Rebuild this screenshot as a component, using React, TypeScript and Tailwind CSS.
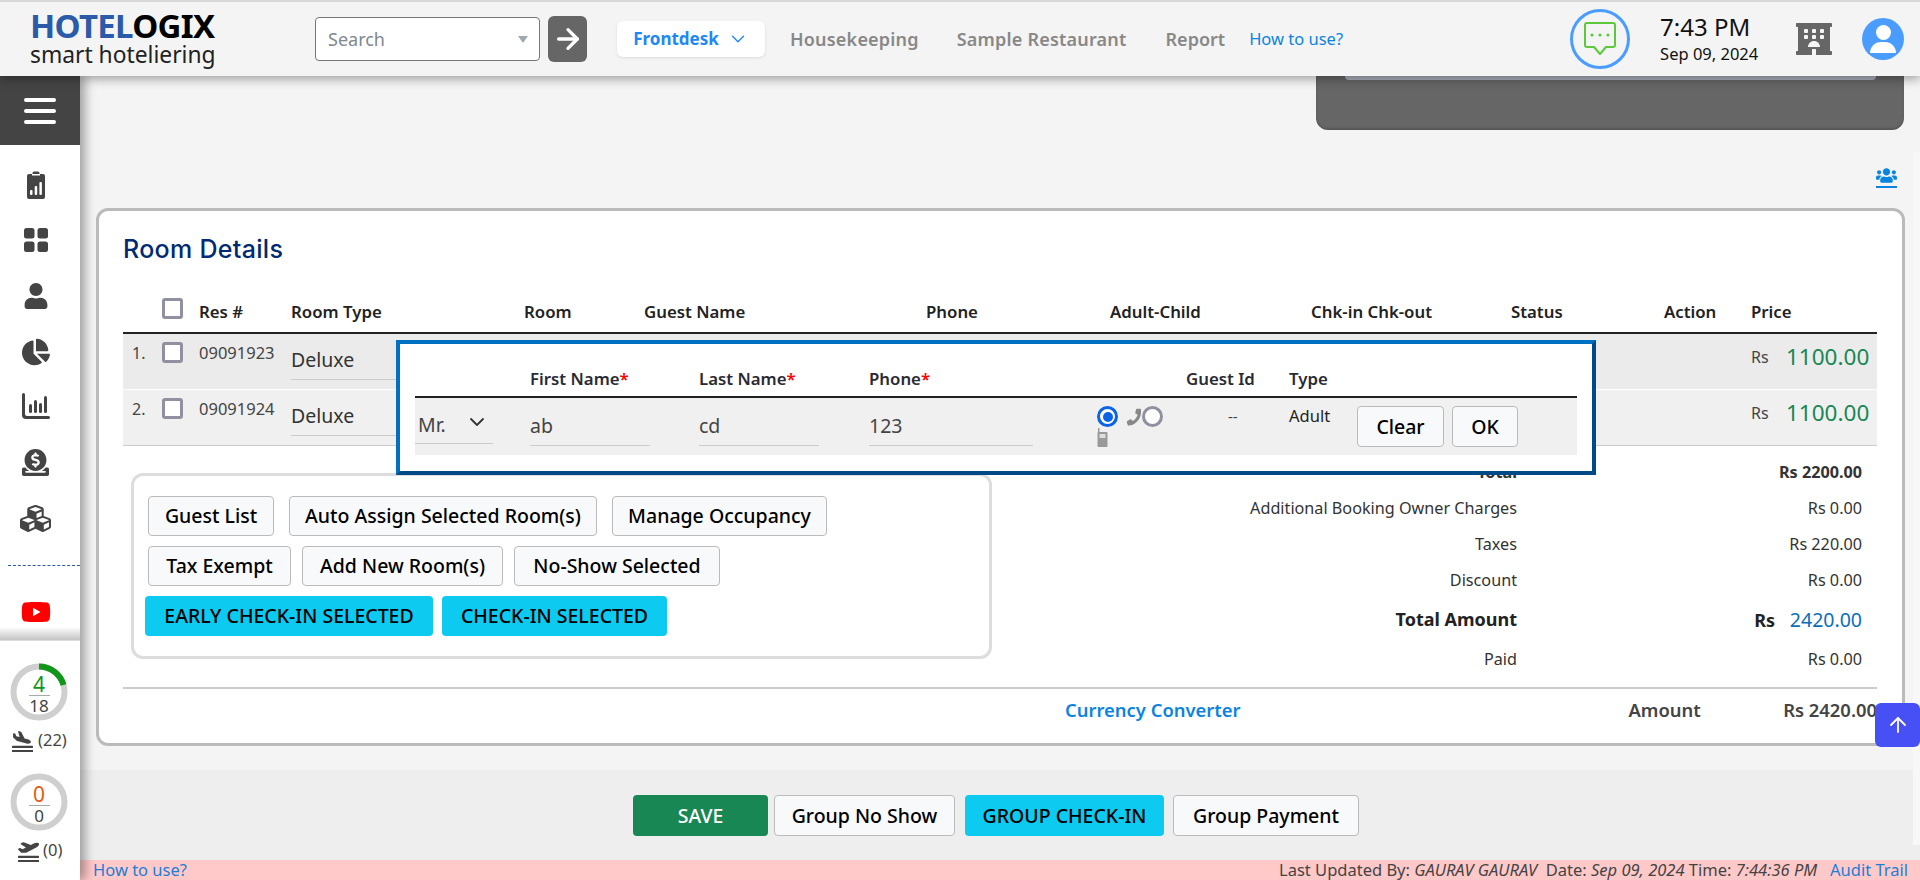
import { ArrowRight, ArrowUp, ChevronDown } from 'lucide-react';
import {
    FaChartPie,
    FaCubes,
    FaDonate,
    FaHotel,
    FaPhone,
    FaPlaneArrival,
    FaPlaneDeparture,
    FaUser,
    FaUsers,
    FaYoutube,
} from 'react-icons/fa';

function ClipboardIcon() {
    return (
        <svg width="18" height="28" viewBox="0 0 18 28" fill="#444">
            <path d="M2 3h3.5V2a1.5 1.5 0 0 1 1.5-1.500h4A1.500 1.500 0 0 1 12.500 2v1H16a2 2 0 0 1 2 2v21a2 2 0 0 1-2 2H2a2 2 0 0 1-2-2V5a2 2 0 0 1 2-2z" />
            <rect x="5" y="3" width="8" height="1.500" fill="#fff" />
            <rect x="3" y="19" width="2.500" height="5" rx="1" fill="#fff" />
            <rect x="7.700" y="15" width="2.500" height="9" rx="1" fill="#fff" />
            <rect x="12.400" y="11" width="2.500" height="13" rx="1" fill="#fff" />
        </svg>
    );
}

function GridIcon() {
    return (
        <svg width="24" height="24" viewBox="0 0 24 24" fill="#444">
            <rect x="0" y="0" width="10.500" height="10.500" rx="2.500" />
            <rect x="13.500" y="0" width="10.500" height="10.500" rx="2.500" />
            <rect x="0" y="13.500" width="10.500" height="10.500" rx="2.500" />
            <rect x="13.500" y="13.500" width="10.500" height="10.500" rx="2.500" />
        </svg>
    );
}

function BarsIcon() {
    return (
        <svg width="28" height="26" viewBox="0 0 28 26" fill="#444">
            <path d="M0 1.500a1.500 1.500 0 0 1 3 0V21a2 2 0 0 0 2 2h21.500a1.500 1.500 0 0 1 0 3H4a4 4 0 0 1-4-4z" />
            <rect x="7" y="11" width="3" height="9" rx="1.500" />
            <rect x="12" y="7" width="3" height="13" rx="1.500" />
            <rect x="17" y="10" width="3" height="10" rx="1.500" />
            <rect x="22" y="3" width="3" height="17" rx="1.500" />
        </svg>
    );
}

function ChatIcon() {
    return (
        <svg width="34" height="36" viewBox="0 0 34 36" fill="none" stroke="#5cc93b" strokeWidth="2">
            <path d="M4 2h26a2 2 0 0 1 2 2v20a2 2 0 0 1-2 2h-7l-6 7-6-7H4a2 2 0 0 1-2-2V4a2 2 0 0 1 2-2z" strokeLinejoin="round" />
            <circle cx="9" cy="14" r="1.600" fill="#5cc93b" stroke="none" />
            <circle cx="17" cy="14" r="1.600" fill="#5cc93b" stroke="none" />
            <circle cx="25" cy="14" r="1.600" fill="#5cc93b" stroke="none" />
        </svg>
    );
}

function MobileIcon() {
    return (
        <svg width="11" height="19" viewBox="0 0 11 19" fill="#999">
            <rect x="1" y="0" width="1.500" height="6" />
            <rect x="0.500" y="4" width="10" height="15" rx="1" />
            <rect x="2.500" y="6" width="6" height="4" fill="#ddd" />
        </svg>
    );
}

function Ring({ top, bottom, color, arc }: { top: string; bottom: string; color: string; arc: boolean }) {
    return (
        <div className="grid w-[58px] h-[58px] ml-[10px]">
            <svg width="58" height="58" viewBox="0 0 58 58" className="[grid-area:1/1]">
                <circle cx="29" cy="29" r="25.500" fill="none" stroke="#cfcfcf" strokeWidth="6" />
                {arc && (
                    <path d="M29 3.500A25.500 25.500 0 0 1 53.500 22" fill="none" stroke="#109618" strokeWidth="6" />
                )}
            </svg>
            <div className="[grid-area:1/1] flex flex-col items-center justify-center pt-[5px]">
                <div className={`text-[21px] leading-[21px] w-[21px] text-center border-b border-[#aaa] ${color}`}>{top}</div>
                <div className="text-[17px] leading-[20px] text-[#444]">{bottom}</div>
            </div>
        </div>
    );
}

function Btn({ children, className }: { children: React.ReactNode; className: string }) {
    return (
        <button className={`h-[40px] rounded-[4px] border border-[#bbb] bg-[#f8f9fa] text-[19.500px] font-medium text-black flex items-center justify-center whitespace-nowrap ${className}`}>
            {children}
        </button>
    );
}

function CyanBtn({ children, className }: { children: React.ReactNode; className: string }) {
    return (
        <button className={`h-[40px] rounded-[4px] bg-[#0dcaf0] text-[19.500px] font-medium text-black flex items-center justify-center whitespace-nowrap ${className}`}>
            {children}
        </button>
    );
}

function Sidebar() {
    return (
        <div className="w-[80px] shrink-0 bg-white flex flex-col z-10 shadow-[5px_0_10px_rgba(0,0,0,0.35)]">
            <div className="h-[69px] bg-[#444] flex flex-col items-center justify-center gap-[7px]">
                <div className="w-[32px] h-[4px] rounded-full bg-white" />
                <div className="w-[32px] h-[4px] rounded-full bg-white" />
                <div className="w-[32px] h-[4px] rounded-full bg-white" />
            </div>
            <div className="h-[482px] flex flex-col items-center pt-[26px] text-[#444]">
                <div className="h-[28px] flex items-center mr-[9px]"><ClipboardIcon /></div>
                <div className="h-[28px] mt-[27px] flex items-center mr-[9px]"><GridIcon /></div>
                <div className="h-[28px] mt-[28px] flex items-center mr-[9px]"><FaUser size={26} /></div>
                <div className="h-[28px] mt-[28px] flex items-center mr-[9px]"><FaChartPie size={28} /></div>
                <div className="h-[28px] mt-[27px] flex items-center mr-[9px]"><BarsIcon /></div>
                <div className="h-[28px] mt-[28px] flex items-center mr-[9px]"><FaDonate size={27} /></div>
                <div className="h-[28px] mt-[28px] flex items-center mr-[9px]"><FaCubes size={31} /></div>
                <div className="w-[72px] self-end mt-[33px] border-t border-dashed border-[#2a5aa8]" />
                <div className="mt-[31px] mr-[9px] text-[#f00]"><FaYoutube size={30} /></div>
            </div>
            <div className="h-[13px] bg-gradient-to-b from-white to-[#c4c4c4]" />
            <div className="flex-1 pt-[22px] border-t border-[#ddd]">
                <Ring top="4" bottom="18" color="text-[#109618]" arc />
                <div className="flex items-center h-[24px] mt-[7px] ml-[12px] text-[16.500px] text-[#444] gap-[5px]">
                    <div className="border-b-2 border-[#444] leading-none"><FaPlaneArrival size={21} /></div>
                    <span>(22)</span>
                </div>
                <div className="mt-[21px]"><Ring top="0" bottom="0" color="text-[#e8590c]" arc={false} /></div>
                <div className="flex items-center h-[24px] mt-[7px] ml-[18px] text-[16.500px] text-[#444] gap-[4px]">
                    <div className="border-b-2 border-[#444] leading-none"><FaPlaneDeparture size={21} /></div>
                    <span>(0)</span>
                </div>
            </div>
        </div>
    );
}

function Header() {
    return (
        <div className="h-[76px] shrink-0 bg-[#f4f4f4] border-t-2 border-[#d8d8d8] z-20 relative shadow-[0_3px_10px_rgba(0,0,0,0.35)] flex items-center">
            {/* Logo */}
            <div className="w-[315px] shrink-0 pl-[30px] mt-[1px]">
                <div className="text-[33px] leading-[28px] font-bold tracking-[-0.700px] whitespace-nowrap">
                    <span className="text-[#2a5aa8]">HOTEL</span>
                    <span className="text-black">OGIX</span>
                </div>
                <div className="text-[24px] leading-[28px] text-[#222] whitespace-nowrap scale-x-[0.95] origin-left">smart hoteliering</div>
            </div>

            {/* Search */}
            <div className="w-[225px] h-[44px] rounded-[4px] border border-[#777] bg-white flex items-center justify-between pl-[12px] pr-[11px]">
                <span className="text-[18px] text-[#808890]">Search</span>
                <div className="w-0 h-0 border-x-[5.500px] border-x-transparent border-t-[7px] border-t-[#a0a8b0]" />
            </div>
            <div className="w-[39px] h-[46px] ml-[8px] rounded-[6px] bg-[#666] flex items-center justify-center">
                <ArrowRight size={32} color="#fff" strokeWidth={2.500} />
            </div>

            {/* Nav */}
            <div className="w-[148px] h-[36px] ml-[30px] rounded-[6px] bg-white flex items-center justify-center gap-[8px] shadow-[0_1px_3px_rgba(0,0,0,0.1)] text-[17px] font-bold text-[#1e88f5]">
                Frontdesk
                <ChevronDown size={22} strokeWidth={1.500} />
            </div>
            <span className="ml-[25px] text-[18px] tracking-[0.2px] font-semibold text-[#888]">Housekeeping</span>
            <span className="ml-[38px] text-[18px] tracking-[0.2px] font-semibold text-[#888]">Sample Restaurant</span>
            <span className="ml-[39px] text-[18px] font-semibold text-[#888]">Report</span>
            <span className="ml-[24px] text-[16.500px] text-[#0a84e0]">How to use?</span>

            {/* Right side */}
            <div className="ml-[227px] w-[60px] h-[60px] rounded-full border-[3px] border-[#4a9dff] flex items-center justify-center">
                <ChatIcon />
            </div>
            <div className="ml-[30px] w-[136px]">
                <div className="text-[24px] leading-[30px] text-[#111]">7:43 PM</div>
                <div className="text-[16.500px] leading-[24px] text-[#111]">Sep 09, 2024</div>
            </div>
            <FaHotel size={36} color="#666" />
            <div className="ml-[30px] w-[42px] h-[42px] rounded-full bg-[#4a9dff] flex flex-col items-center justify-center overflow-hidden">
                <div className="w-[15px] h-[15px] rounded-full bg-white" />
                <div className="w-[26px] h-[11px] mt-[2px] rounded-t-full bg-white" />
            </div>
        </div>
    );
}

const rowCols = ['w-[39px]', 'w-[37px]', 'w-[92px]', 'w-[233px]', 'w-[120px]', 'w-[282px]', 'w-[184px]', 'w-[201px]', 'w-[200px]', 'w-[153px]', 'w-[87px]', 'w-[126px]'];
const headers = ['', '', 'Res #', 'Room Type', 'Room', 'Guest Name', 'Phone', 'Adult-Child', 'Chk-in Chk-out', 'Status', 'Action', 'Price'];

function Checkbox() {
    return <div className="w-[21px] h-[21px] rounded-[3px] border-[3px] border-[#9090a0] bg-white" />;
}

function RoomRow({ no, res, bg }: { no: string; res: string; bg: string }) {
    return (
        <div className={`flex h-[55px] ${bg} text-[#444]`}>
            <div className="w-[39px] pl-[9px] pt-[7px] text-[16px] leading-[24px]">{no}</div>
            <div className="w-[37px] pt-[8px]"><Checkbox /></div>
            <div className="w-[92px] pt-[7px] text-[16.500px] leading-[24px]">{res}</div>
            <div className="w-[200px] h-[46px] pt-[13px] border-b border-[#ccc] text-[19.500px] leading-[26px] text-[#333]">Deluxe</div>
            <div className="flex-1" />
            <div className="w-[126px] flex items-center pb-[10px] text-[#444]">
                <span className="text-[16px] w-[35px]">Rs</span>
                <span className="text-[22.500px] text-[#198754]">1100.00</span>
            </div>
        </div>
    );
}

function SummaryRow({ label, value, h, bold }: { label: string; value: React.ReactNode; h: string; bold?: boolean }) {
    return (
        <div className={`flex items-center ${h} ${bold ? 'font-bold' : ''} text-[16.200px] text-[#333]`}>
            <div className="w-[533px] text-right">{label}</div>
            <div className="w-[345px] text-right">{value}</div>
        </div>
    );
}

function RoomDetails() {
    return (
        <div className="ml-[16px] w-[1809px] h-[538px] shrink-0 rounded-[12px] border-[3px] border-[#bbb] bg-white pl-[24px] pt-[22px]">
            <h2 className="text-[25px] leading-[32px] font-medium tracking-[0.3px] text-[#002a72] font-[Inter,sans-serif]">Room Details</h2>

            {/* Table */}
            <div className="w-[1754px] mt-[33px]">
                <div className="flex h-[36px] border-b-2 border-[#222] text-[16.800px] font-semibold text-[#222] items-start">
                    {headers.map((h, i) => (
                        <div key={i} className={`${rowCols[i]} leading-[28px] whitespace-nowrap`}>
                            {i === 1 ? <Checkbox /> : h}
                        </div>
                    ))}
                </div>
                <RoomRow no="1." res="09091923" bg="bg-[#ebebeb]" />
                <div className="h-[1px] bg-white" />
                <RoomRow no="2." res="09091924" bg="bg-[#f0f0f0]" />
                <div className="h-[1px] bg-[#ccc]" />
            </div>

            {/* Actions and totals */}
            <div className="flex h-[241px]">
                <div className="w-[861px] shrink-0 pl-[8px] pt-[27px]">
                    <div className="w-[861px] h-[186px] rounded-[12px] border-[3px] border-[#ddd] pt-[20px] pl-[14px] flex flex-col gap-[10px]">
                        <div className="flex gap-[15px]">
                            <Btn className="w-[126px]">Guest List</Btn>
                            <Btn className="w-[308px]">Auto Assign Selected Room(s)</Btn>
                            <Btn className="w-[215px]">Manage Occupancy</Btn>
                        </div>
                        <div className="flex gap-[11px]">
                            <Btn className="w-[143px]">Tax Exempt</Btn>
                            <Btn className="w-[201px]">Add New Room(s)</Btn>
                            <Btn className="w-[206px]">No-Show Selected</Btn>
                        </div>
                        <div className="flex gap-[9px] -ml-[3px]">
                            <CyanBtn className="w-[288px]">EARLY CHECK-IN SELECTED</CyanBtn>
                            <CyanBtn className="w-[225px]">CHECK-IN SELECTED</CyanBtn>
                        </div>
                    </div>
                </div>
                <div className="flex-1 pt-[8px]">
                    <SummaryRow label="Total" value="Rs 2200.00" h="h-[36px]" bold />
                    <SummaryRow label="Additional Booking Owner Charges" value="Rs 0.00" h="h-[36px]" />
                    <SummaryRow label="Taxes" value="Rs 220.00" h="h-[36px]" />
                    <SummaryRow label="Discount" value="Rs 0.00" h="h-[37px]" />
                    <div className="flex items-center h-[41px] font-bold text-[#222]">
                        <div className="w-[533px] text-right text-[18px]">Total Amount</div>
                        <div className="w-[345px] text-right text-[18px]">
                            Rs <span className="ml-[10px] text-[19.500px] font-normal text-[#0a6ebd]">2420.00</span>
                        </div>
                    </div>
                    <SummaryRow label="Paid" value="Rs 0.00" h="h-[38px]" />
                </div>
            </div>

            {/* Card bottom */}
            <div className="w-[1754px] border-t-2 border-[#ccc] h-[44px] flex items-center text-[18.400px] font-semibold">
                <span className="ml-[942px] text-[#0a84e0] whitespace-nowrap">Currency Converter</span>
                <span className="ml-[388px] w-[157px] text-[#444]">Amount</span>
                <span className="text-[#444] whitespace-nowrap">Rs 2420.00</span>
            </div>
        </div>
    );
}

function GuestPopup() {
    return (
        <div className="absolute left-[396px] top-[340px] w-[1200px] h-[135px] z-[5] bg-white border-t-[4px] border-l-[4px] border-b-[4px] border-r-[4px] border-t-[#0070c0] border-l-[#0070c0] border-b-[#004b87] border-r-[#004b87] pl-[15px] pt-[22px]">
            <div className="w-[1162px] h-[32px] flex border-b-2 border-[#222] text-[16.800px] font-semibold text-[#2a2a33]">
                <div className="w-[115px]" />
                <div className="w-[169px]">First Name<span className="text-[#f00]">*</span></div>
                <div className="w-[170px]">Last Name<span className="text-[#f00]">*</span></div>
                <div className="w-[317px]">Phone<span className="text-[#f00]">*</span></div>
                <div className="w-[103px]">Guest Id</div>
                <div>Type</div>
            </div>
            <div className="w-[1162px] h-[57px] flex bg-[#f0f0f0] text-[#444]">
                <div className="w-[115px]">
                    <div className="w-[78px] h-[46px] flex items-center justify-between pl-[3px] pr-[4px] pt-[8px] border-b border-[#ccc] text-[19.500px]">
                        Mr.
                        <ChevronDown size={24} strokeWidth={1.800} className="text-[#333] -mt-[5px]" />
                    </div>
                </div>
                <div className="w-[169px]">
                    <div className="w-[120px] h-[48px] pt-[15px] border-b border-[#ccc] text-[19.500px] leading-[26px]">ab</div>
                </div>
                <div className="w-[170px]">
                    <div className="w-[120px] h-[48px] pt-[15px] border-b border-[#ccc] text-[19.500px] leading-[26px]">cd</div>
                </div>
                <div className="w-[231px]">
                    <div className="w-[164px] h-[48px] pt-[15px] border-b border-[#ccc] text-[19.500px] leading-[26px]">123</div>
                </div>
                <div className="w-[86px] pt-[8px] -ml-[3px] mr-[3px]">
                    <div className="flex items-center">
                        <div className="w-[21px] h-[21px] rounded-full border-[3px] border-[#0b63e5] bg-white flex items-center justify-center">
                            <div className="w-[10px] h-[10px] rounded-full bg-[#0b63e5]" />
                        </div>
                        <FaPhone size={16} color="#888" className="ml-[8px] rotate-[-8deg]" />
                        <div className="w-[21px] h-[21px] rounded-full border-[3px] border-[#9090a0] bg-white" />
                    </div>
                    <div className="mt-[1px]"><MobileIcon /></div>
                </div>
                <div className="w-[103px] pt-[6px] pl-[42px] text-[15px] leading-[24px]">--</div>
                <div className="w-[68px] pt-[6px] text-[16.500px] leading-[24px] text-[#222]">Adult</div>
                <div className="flex gap-[8px] pt-[8px]">
                    <Btn className="w-[87px] !h-[41px]">Clear</Btn>
                    <Btn className="w-[66px] !h-[41px]">OK</Btn>
                </div>
            </div>
        </div>
    );
}

export default function App() {
    return (
        <div className="relative w-[1920px] h-[880px] overflow-hidden bg-[#f4f4f4] flex flex-col font-['Noto_Sans',sans-serif]">
            <Header />
            <div className="flex flex-1 min-h-0">
                <Sidebar />
                <div className="flex-1 min-w-0 flex flex-col bg-[#f4f4f4] relative">
                    {/* Panel showing from under the header */}
                    <div className="ml-[1236px] w-[588px] h-[54px] shrink-0 rounded-b-[12px] bg-[#666] shadow-[inset_0_-2px_2px_rgba(0,0,0,0.15)]">
                        <div className="ml-[29px] w-[531px] h-[4px] rounded-b-[8px] bg-[#aab0bc]" />
                    </div>

                    <div className="h-[78px] shrink-0 flex items-start justify-end pt-[35px] pr-[23px]">
                        <div className="border-b-2 border-[#0a84e0] text-[#0a84e0] leading-none"><FaUsers size={21} /></div>
                    </div>

                    <RoomDetails />

                    <div className="h-[24px] shrink-0" />

                    {/* Bottom buttons */}
                    <div className="flex-1 bg-[#eeeeee] flex items-start pt-[25px] pl-[553px]">
                        <button className="w-[135px] h-[41px] rounded-[4px] bg-[#198754] text-[19.500px] font-medium text-white">SAVE</button>
                        <Btn className="w-[181px] ml-[6px] !h-[41px]">Group No Show</Btn>
                        <CyanBtn className="w-[199px] ml-[10px] !h-[41px]">GROUP CHECK-IN</CyanBtn>
                        <Btn className="w-[186px] ml-[9px] !h-[41px]">Group Payment</Btn>
                    </div>

                    {/* Footer */}
                    <div className="h-[20px] shrink-0 bg-[#ffc9c9] flex items-center justify-between pl-[13px] pr-[12px] text-[16.500px] text-[#444]">
                        <span className="text-[16.500px] text-[#1c7ed6]">How to use?</span>
                        <span className="whitespace-pre">
                            Last Updated By: <i>GAURAV GAURAV</i>{'  '}Date: <i>Sep 09, 2024</i> Time: <i>7:44:36 PM</i>{'   '}
                            <span className="text-[#1c7ed6]">Audit Trail</span>
                        </span>
                    </div>

                    <div className="absolute right-0 top-[76px] w-[7px] h-[693px] bg-[#f8f8f8]" />
                </div>
            </div>

            <GuestPopup />

            <button className="absolute left-[1875px] top-[703px] w-[45px] h-[44px] rounded-[6px] bg-[#4650f5] flex items-center justify-center z-[6]">
                <ArrowUp size={24} color="#fff" strokeWidth={1.800} />
            </button>
        </div>
    );
}
